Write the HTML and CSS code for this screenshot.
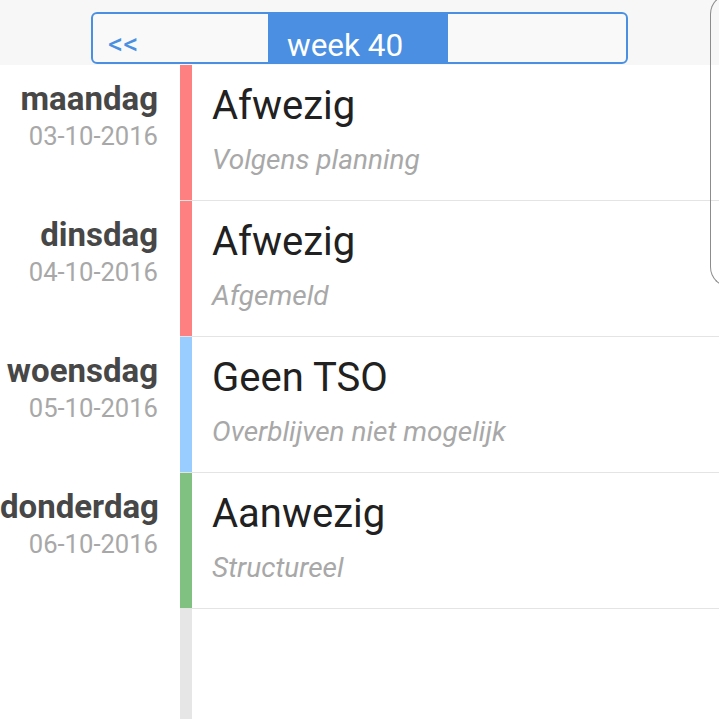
FILE: index.html
```html
<!DOCTYPE html>
<html lang="nl">
<head>
<meta charset="utf-8">
<title>Week 40</title>
<link rel="stylesheet" href="styles.css">
</head>
<body>
<div class="page">
  <header class="header">
    <div class="segmented">
      <div class="seg seg-prev">&lt;&lt;</div>
      <div class="seg seg-active">week 40</div>
      <div class="seg seg-next"></div>
    </div>
  </header>
  <main class="list">
    <div class="row">
      <div class="day">
        <div class="day-name">maandag</div>
        <div class="day-date">03-10-2016</div>
      </div>
      <div class="bar bar-red"></div>
      <div class="entry">
        <div class="entry-title">Afwezig</div>
        <div class="entry-sub">Volgens planning</div>
      </div>
    </div>
    <div class="row">
      <div class="day">
        <div class="day-name">dinsdag</div>
        <div class="day-date">04-10-2016</div>
      </div>
      <div class="bar bar-red"></div>
      <div class="entry">
        <div class="entry-title">Afwezig</div>
        <div class="entry-sub">Afgemeld</div>
      </div>
    </div>
    <div class="row">
      <div class="day">
        <div class="day-name">woensdag</div>
        <div class="day-date">05-10-2016</div>
      </div>
      <div class="bar bar-blue"></div>
      <div class="entry">
        <div class="entry-title">Geen TSO</div>
        <div class="entry-sub">Overblijven niet mogelijk</div>
      </div>
    </div>
    <div class="row">
      <div class="day">
        <div class="day-name">donderdag</div>
        <div class="day-date">06-10-2016</div>
      </div>
      <div class="bar bar-green"></div>
      <div class="entry">
        <div class="entry-title">Aanwezig</div>
        <div class="entry-sub">Structureel</div>
      </div>
    </div>
    <div class="filler">
      <div class="filler-left"></div>
      <div class="bar bar-empty"></div>
      <div class="filler-right"></div>
    </div>
  </main>
  <div class="edge"></div>
</div>
</body>
</html>
```
FILE: styles.css
```css
* { box-sizing: border-box; }

html, body {
  margin: 0;
  padding: 0;
  height: 100%;
  background: #ffffff;
  font-family: Roboto, "Noto Sans", "Liberation Sans", sans-serif;
  overflow: hidden;
}

.page {
  position: relative;
  height: 719px;
  display: flex;
  flex-direction: column;
}

.header {
  height: 65px;
  flex: 0 0 65px;
  background: #f7f7f7;
  padding: 12px 0 0 91px;
}

.segmented {
  width: 537px;
  height: 52px;
  border: 2px solid #4a90e2;
  border-radius: 6px;
  background: #f9f9f9;
  display: grid;
  grid-template-columns: 175px 180px 1fr;
  overflow: hidden;
}

.seg {
  display: flex;
  align-items: flex-end;
  line-height: 1;
}

.seg-prev {
  color: #4a90e2;
  font-size: 30px;
  padding: 0 0 3px 15px;
}

.seg-active {
  background: #4a8fe2;
  color: #ffffff;
  font-size: 31.5px;
  padding: 0 0 1px 19px;
}

.list {
  flex: 1 1 auto;
  display: flex;
  flex-direction: column;
}

.row {
  display: grid;
  grid-template-columns: 180px 12px 1fr;
  height: 136px;
  flex: 0 0 136px;
}

.day {
  text-align: right;
  padding: 14px 22px 0 0;
}

.day-name {
  font-size: 33px;
  line-height: 40px;
  font-weight: 700;
  color: #474747;
  white-space: nowrap;
}

.day-date {
  font-size: 25.6px;
  line-height: 34px;
  color: #a8a8a8;
  white-space: nowrap;
}

.bar {
  border-bottom: 1.5px solid #e4e4e4;
}

.bar-red { background: #ff8080; }
.bar-blue { background: #99ccff; }
.bar-green { background: #80c080; }
.bar-empty { background: #e6e6e6; border-bottom: none; }

.entry {
  border-bottom: 1.5px solid #e4e4e4;
  padding: 18px 0 0 20px;
}

.entry-title {
  font-size: 40px;
  line-height: 46px;
  color: #212121;
  white-space: nowrap;
}

.entry-sub {
  margin-top: 14px;
  font-size: 28px;
  line-height: 34px;
  font-style: italic;
  color: #a8a8a8;
  white-space: nowrap;
}

.filler {
  flex: 1 1 auto;
  display: grid;
  grid-template-columns: 180px 12px 1fr;
}

.edge {
  position: absolute;
  left: 710px;
  top: -6px;
  width: 20px;
  height: 293px;
  border: 1.5px solid #8c8c8c;
  border-right: none;
  border-radius: 20px 0 0 20px;
}
```
